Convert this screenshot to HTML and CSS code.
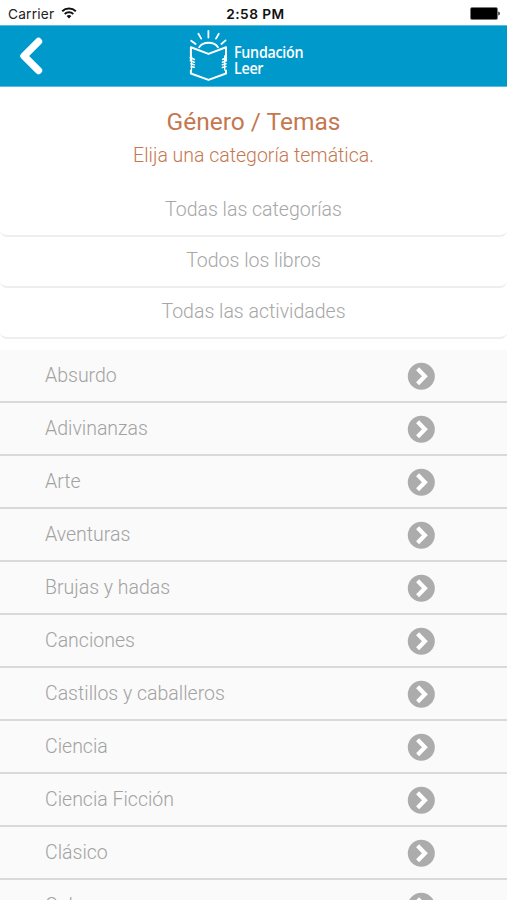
FILE: index.html
```html
<!DOCTYPE html>
<html lang="es">
<head>
<meta charset="utf-8">
<title>Género / Temas</title>
<link rel="stylesheet" href="styles.css">
</head>
<body>
<svg class="defs" aria-hidden="true">
  <symbol id="go" viewBox="0 0 28 28"><circle cx="14.3" cy="14.2" r="13.5" fill="#acacac"/><path d="M10.6 6.7 17.9 14.2 10.6 21.7" fill="none" stroke="#fff" stroke-width="4.2"/></symbol>
</svg>
<div class="status">
  <div class="carrier"><span>Carrier</span>
    <svg width="16" height="12" viewBox="0 0 16 12" fill="none" stroke="#111" stroke-width="1.9"><path d="M1.2 4.3a9.8 9.8 0 0 1 13.6 0M3.7 7a6.2 6.2 0 0 1 8.6 0"/><path d="M8 11.5 5.6 9.1a3.5 3.5 0 0 1 4.8 0Z" fill="#111" stroke="none"/></svg>
  </div>
  <span class="time">2:58 PM</span>
  <svg class="battery" width="30" height="13" viewBox="0 0 30 13"><rect x=".5" y=".5" width="27" height="12" rx="1.5" fill="#000" stroke="#777" stroke-width=".7"/><path d="M28.3 4.5q1.5 0 1.5 2t-1.5 2Z" fill="#222"/></svg>
</div>
<header class="bar">
  <svg class="back" width="24" height="38" viewBox="0 0 24 38"><path d="M19.5 4.5 5 19 19.5 33.5" fill="none" stroke="#fff" stroke-width="7.4" stroke-linecap="round" stroke-linejoin="round"/></svg>
  <div class="brand">
    <svg width="40" height="52" viewBox="0 0 40 52" fill="none" stroke="#fff" stroke-width="2" stroke-linecap="round" stroke-linejoin="round">
      <path d="M1.9 31V18.2L19.5 24.9 37 18.2V31M1.9 41.5V44.5L19.5 50.9 37 44.5V41.5"/>
      <path d="M10.2 18.3c3.8-6.1 15-6.1 18.8 0" stroke-width="1.8"/>
      <path d="M2.2 11.7 6.6 15M9.4 4.8 12.2 9.6M19.4 1.8V8.6M29.8 4.8 27 9.6M36.6 11.4 32.4 15" stroke-width="1.8"/>
      <path d="M1.3 28.5 5.4 30.5M1.4 31.7 5.4 33.2M2 34.7 5.2 35.8M2.2 37.5 5.2 38.3M37.4 28.5 33.6 30.5M37.4 31.7 33.4 33.2M37 34.7 33.4 35.8M37 37.5 33.4 38.5" stroke-width="1.6"/>
      <path d="M2.5 27V41M35.7 27V41" stroke-width="1.3"/>
    </svg>
    <div class="name"><div>Fundación</div><div>Leer</div></div>
  </div>
</header>
<main>
  <div class="heading">
    <h1>Género / Temas</h1>
    <p>Elija una categoría temática.</p>
  </div>
  <nav class="filters">
    <a class="filter">Todas las categorías</a>
    <a class="filter">Todos los libros</a>
    <a class="filter">Todas las actividades</a>
  </nav>
  <ul class="topics">
    <li><span>Absurdo</span><svg><use href="#go"/></svg></li>
    <li><span>Adivinanzas</span><svg><use href="#go"/></svg></li>
    <li><span>Arte</span><svg><use href="#go"/></svg></li>
    <li><span>Aventuras</span><svg><use href="#go"/></svg></li>
    <li><span>Brujas y hadas</span><svg><use href="#go"/></svg></li>
    <li><span>Canciones</span><svg><use href="#go"/></svg></li>
    <li><span>Castillos y caballeros</span><svg><use href="#go"/></svg></li>
    <li><span>Ciencia</span><svg><use href="#go"/></svg></li>
    <li><span>Ciencia Ficción</span><svg><use href="#go"/></svg></li>
    <li><span>Clásico</span><svg><use href="#go"/></svg></li>
    <li><span>Colores</span><svg><use href="#go"/></svg></li>
  </ul>
</main>
</body>
</html>
```
FILE: styles.css
```css
* { box-sizing: border-box; }
html, body { height: 100%; }
body { margin: 0; overflow: hidden; background: #fff; font-family: Roboto, "Liberation Sans", sans-serif; font-weight: 300; }
.defs { display: none; }
.status { height: 25px; padding: 2px 7px 0 8px; display: grid; grid-template-columns: 1fr auto 1fr; align-items: center; font: 400 13.7px/20px Inter, sans-serif; letter-spacing: .2px; color: #222; }
.carrier { display: flex; align-items: center; gap: 7px; }
.carrier svg { margin-top: -2px; }
.time { font-weight: 600; letter-spacing: .45px; color: #111; margin-left: 3px; }
.battery { justify-self: end; }
.bar { height: 62px; background: #0099cc; border: solid #55bddf; border-width: 1px 0; display: grid; grid-template-columns: 1fr auto 1fr; align-items: center; padding: 0 19px; }
.brand { display: flex; align-items: center; gap: 5px; margin-left: -14px; margin-top: -2px; width: 115px; }
.brand svg { flex: none; }
.name { font: 600 15.5px/16px "Open Sans", sans-serif; color: #fff; margin-top: 10px; letter-spacing: -.3px; transform: scaleX(.92); transform-origin: left; }
.heading { height: 95px; padding-top: 20px; text-align: center; color: #c57850; }
h1 { margin: 0; font-size: 24.5px; line-height: 30px; font-weight: 400; }
p { margin: 4px 0 0; font-size: 19.5px; line-height: 30px; }
.filters { height: 167.5px; padding-top: 3.5px; }
.filter { display: block; height: 51.3px; line-height: 47px; text-align: center; font-size: 19.5px; color: #a6a6a6; border-radius: 7px; border-bottom: 2px solid #eee; }
.topics { list-style: none; margin: 0; padding: 0; }
.topics li { height: 53px; padding: 0 72px 0 45px; display: flex; align-items: center; justify-content: space-between; background: #fafafa; border-bottom: 2px solid #d9d9d9; font-size: 19.5px; color: #a2a2a2; }
.topics svg { width: 28px; height: 28px; margin-top: 1px; }
```
